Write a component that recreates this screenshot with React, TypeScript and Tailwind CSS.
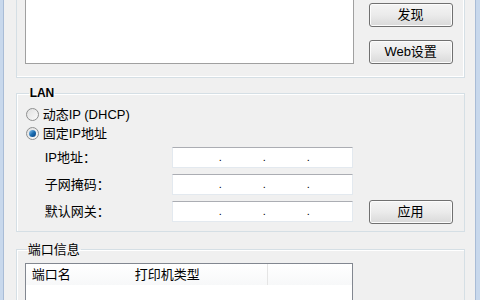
import React from "react";

const font = { fontFamily: '"Liberation Sans", "Noto Sans CJK SC", sans-serif' };

const Button = ({ children }: { children: React.ReactNode }) => (
  <button className="w-[84px] h-[24px] rounded-[3px] border border-[#707070] bg-gradient-to-b from-[#f4f4f4] via-[#ebebeb] to-[#d9d9d9] text-[13px] text-black shadow-[inset_0_0_0_1px_#fcfcfc]">
    {children}
  </button>
);

const Radio = ({ checked, label }: { checked?: boolean; label: string }) => (
  <label className="flex items-center gap-[4px] h-[19px] text-[13px] text-black">
    <span className="w-[13px] h-[13px] rounded-full border border-[#8e8f8f] bg-gradient-to-br from-[#e0e0e0] to-[#fafafa] flex items-center justify-center">
      {checked && <span className="w-[7px] h-[7px] rounded-full bg-gradient-to-br from-[#8ecbf1] via-[#1c6fb3] to-[#0c3f7d]" />}
    </span>
    {label}
  </label>
);

const IpBox = () => (
  <div className="w-[181px] h-[21px] bg-white border border-[#e3e9ef] border-t-[#abadb3] flex items-center text-[11px] leading-none">
    <span className="w-[46px]" />
    <span className="w-[44px]">.</span>
    <span className="w-[44px]">.</span>
    <span>.</span>
  </div>
);

const Field = ({ label, last }: { label: string; last?: boolean }) => (
  <div className="flex items-center h-[21px]">
    <span className="w-[146px] pl-[19px] text-[13px] text-black">{label}</span>
    <IpBox />
    {last && (
      <div className="ml-[16px]">
        <Button>应用</Button>
      </div>
    )}
  </div>
);

export default function App() {
  return (
    <div className="w-[480px] h-[300px] overflow-hidden flex bg-[#f0f0f0]" style={font}>
      <div className="w-[4px] bg-[#c8d8ec] border-r border-[#a9bcd6]" />
      <div className="flex-1 flex flex-col pl-[12px] pr-[10px]">
        {/* top group */}
        <div className="h-[78px] shrink-0 border-x border-b border-[#d5dfe5] shadow-[inset_-1px_-1px_0_#ffffff] flex pl-[8px] pr-[11px]">
          <div className="w-[329px] h-[64px] bg-white border border-[#a0a0a0] border-t-0" />
          <div className="ml-auto flex flex-col gap-[13px] pt-[3px]">
            <Button>发现</Button>
            <Button>Web设置</Button>
          </div>
        </div>

        {/* LAN */}
        <fieldset className="mt-[8px] h-[146px] shrink-0 border border-[#d5dfe5] shadow-[inset_1px_1px_0_#ffffff] pl-[9px] pr-[11px]">
          <legend className="ml-[3px] px-[1px] text-[12px] font-bold text-black leading-[14px]">LAN</legend>
          <div className="flex flex-col pt-[5px]">
            <Radio label="动态IP (DHCP)" />
            <Radio checked label="固定IP地址" />
            <div className="flex flex-col gap-[6px] mt-[4px]">
              <Field label="IP地址：" />
              <Field label="子网掩码：" />
              <Field label="默认网关：" last />
            </div>
          </div>
        </fieldset>

        {/* port info */}
        <fieldset className="mt-[10px] flex-1 border border-[#d5dfe5] border-b-0 shadow-[inset_1px_1px_0_#ffffff] pl-[8px]">
          <legend className="ml-[2px] px-[1px] text-[13px] text-black leading-[15px]">端口信息</legend>
          <div className="mt-[6px] w-[328px] h-[60px] bg-white border border-[#828790] border-b-0">
            <div className="flex h-[21px] text-[13px] text-black bg-gradient-to-b from-white to-[#f7f8f9]">
              <div className="w-[242px] flex items-center border-r border-[#e5e5e5]">
                <span className="pl-[6px] w-[109px]">端口名</span>
                <span>打印机类型</span>
              </div>
              <div className="flex-1" />
            </div>
          </div>
        </fieldset>
      </div>
      <div className="w-[6px] bg-[#c8d8ec] border-l border-[#a9bcd6]" />
    </div>
  );
}
